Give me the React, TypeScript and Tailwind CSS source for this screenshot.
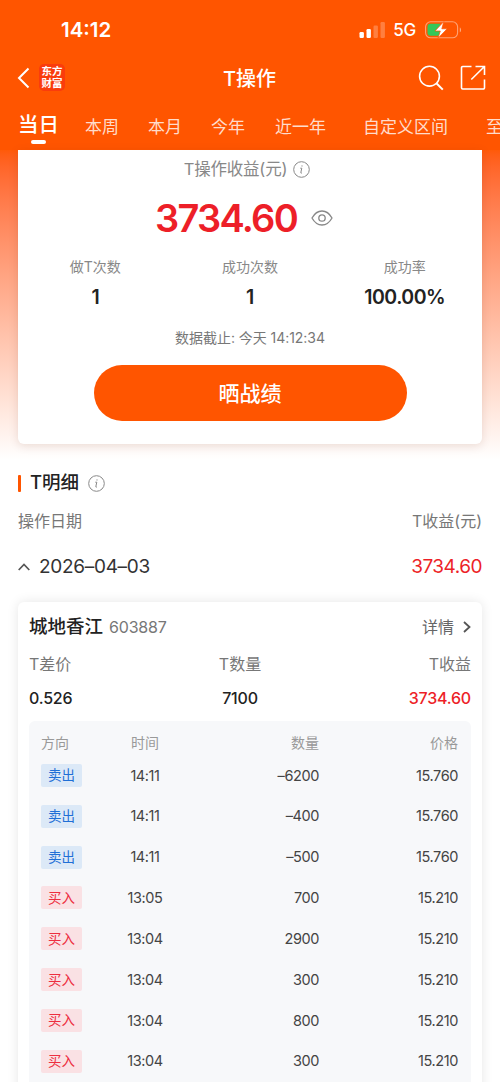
import React from "react";
import clsx from "clsx";

const tabs = [
  { label: "本周", className: "ml-[26px]" },
  { label: "本月", className: "ml-[29px]" },
  { label: "今年", className: "ml-[29px]" },
  { label: "近一年", className: "ml-[30px]" },
  { label: "自定义区间", className: "ml-[37px] text-[17.3px]" },
  { label: "至今", className: "ml-[38px]" },
];

const stats = [
  { label: "做T次数", value: "1" },
  { label: "成功次数", value: "1" },
  { label: "成功率", value: "100.00%" },
];

const trades = [
  { side: "sell", time: "14:11", amount: "–6200", price: "15.760" },
  { side: "sell", time: "14:11", amount: "–400", price: "15.760" },
  { side: "sell", time: "14:11", amount: "–500", price: "15.760" },
  { side: "buy", time: "13:05", amount: "700", price: "15.210" },
  { side: "buy", time: "13:04", amount: "2900", price: "15.210" },
  { side: "buy", time: "13:04", amount: "300", price: "15.210" },
  { side: "buy", time: "13:04", amount: "800", price: "15.210" },
  { side: "buy", time: "13:04", amount: "300", price: "15.210" },
];

const InfoIcon: React.FC = () => (
  <svg width="17" height="17" viewBox="0 0 17 17" fill="none" stroke="#888" strokeWidth="1">
    <circle cx="8.5" cy="8.5" r="7.8" />
    <path d="M7.3 7.2h1.5l-1 4.4c-.1.6.5.7 1.2.2" />
    <circle cx="9" cy="4.9" r=".6" fill="#888" stroke="none" />
  </svg>
);

const StatusBar: React.FC = () => (
  <div className="flex h-[60px] items-center justify-between pr-[38px] pl-[61px]">
    <span className="pt-px text-[20.5px] font-semibold">14:12</span>
    <div className="flex items-center">
      <svg width="26" height="16" viewBox="0 0 26 16" fill="#fff">
        <rect x="0.500" y="10" width="4.4" height="6" rx="1.2" />
        <rect x="7.500" y="7" width="4.4" height="9" rx="1.2" />
        <rect x="14.500" y="3.5" width="4.4" height="12.5" rx="1.2" opacity=".25" />
        <rect x="21.500" y="0" width="4.4" height="16" rx="1.2" opacity=".25" />
      </svg>
      <span className="ml-2 pt-[2px] text-[17px] font-medium tracking-[-0.2px]">5G</span>
      <svg className="ml-[9px]" width="37" height="18" viewBox="0 0 37 18">
        <rect x=".6" y=".8" width="32" height="16" rx="5" fill="none" stroke="#fff" strokeOpacity=".45" strokeWidth="1.1" />
        <path d="M34.8 6.4c1.6.5 1.6 4.3 0 4.8z" fill="#fff" fillOpacity=".5" />
        <path d="M5.5 2.8H15v12H5.5a3 3 0 0 1-3-3v-6a3 3 0 0 1 3-3z" fill="#34c759" />
        <path d="M18.8.6 10 10h5.3l-2.3 7.2L22.2 7.8h-5.4z" fill="#fff" stroke="#ff5500" strokeWidth=".7" />
      </svg>
    </div>
  </div>
);

const NavBar: React.FC = () => (
  <div className="flex h-[35px] items-center justify-between pr-[14px] pl-[17px]">
    <div className="flex w-[100px] items-center gap-[9px]">
      <svg width="13" height="22" viewBox="0 0 13 22" fill="none" stroke="#fff" strokeWidth="2">
        <path d="M11.5 1.5 2 11l9.5 9.5" />
      </svg>
      <div className="flex h-[27px] w-[26px] flex-col items-center justify-center rounded-[5px] bg-[#fa3c0c] text-[10.5px] leading-[11.5px] font-bold">
        <span>东方</span>
        <span>财富</span>
      </div>
    </div>
    <h1 className="ml-[-4px] pt-[3px] text-[20px] font-medium">T操作</h1>
    <div className="flex w-[100px] items-center justify-end gap-4">
      <svg width="26" height="26" viewBox="0 0 26 26" fill="none" stroke="#fff" strokeWidth="1.6">
        <circle cx="11.5" cy="11.2" r="9.9" />
        <path d="m18.4 18.2 6.4 6.4" strokeWidth="2" />
      </svg>
      <svg width="26" height="26" viewBox="0 0 26 26" fill="none" stroke="#fff" strokeWidth="1.6">
        <path d="M11.500 1.500H2.700A1.200 1.200 0 0 0 1.500 2.700v20.100A1.200 1.200 0 0 0 2.700 24h20.600a1.200 1.200 0 0 0 1.200-1.200v-8.300" />
        <path d="M15.500 1.500h9v8.500M24.200 1.800 11.300 14.500" />
      </svg>
    </div>
  </div>
);

const Tabs: React.FC = () => (
  <div className="flex h-[55px] items-start overflow-hidden pl-[18px] whitespace-nowrap">
    <div className="flex shrink-0 flex-col items-center pt-[15px]">
      <span className="text-[20.5px] leading-[30px] font-medium">当日</span>
      <span className="h-[4px] w-[15px] rounded-full bg-white" />
    </div>
    {tabs.map((tab) => (
      <span
        key={tab.label}
        className={clsx("shrink-0 pt-[20px] text-[17px] leading-[25px] text-[#ffdccb]", tab.className)}
      >
        {tab.label}
      </span>
    ))}
  </div>
);

const Summary: React.FC = () => (
  <section className="h-[310px] bg-linear-to-b from-[#ff5a08] to-white px-[18px]">
    <div className="flex h-[294px] flex-col items-center rounded-b-[6px] bg-white shadow-[0_2px_10px_rgba(90,30,10,0.13)]">
      <div className="ml-[-6px] flex h-[38px] items-center gap-[6px] text-[16.5px] tracking-[-0.2px] text-[#888]">
        T操作收益(元)
        <InfoIcon />
      </div>
      <div className="mt-[6px] ml-[-12px] flex h-[48px] items-center gap-[14px]">
        <span className="text-[38px] font-semibold tracking-[-1.7px] text-[#ed1f28]">3734.60</span>
        <svg width="22" height="18" viewBox="0 0 22 18" fill="none" stroke="#888" strokeWidth="1.3">
          <path d="M1 9c2.500-4.500 6-7 10-7s7.500 2.500 10 7c-2.500 4.500-6 7-10 7S3.500 13.500 1 9z" />
          <circle cx="11" cy="9" r="3.2" />
        </svg>
      </div>
      <div className="mt-[14px] grid w-full grid-cols-3 text-center">
        {stats.map((stat) => (
          <div key={stat.label}>
            <div className="text-[14px] leading-[22px] text-[#888]">{stat.label}</div>
            <div className="mt-[5px] text-[19.5px] leading-[28px] font-semibold tracking-[-0.5px] text-[#222]">
              {stat.value}
            </div>
          </div>
        ))}
      </div>
      <p className="mt-[16px] text-[14px] leading-[22px] tracking-[-0.05px] text-[#777]">数据截止: 今天 14:12:34</p>
      <button className="mt-[16px] h-[56px] w-[313px] rounded-full bg-[#ff5500] pt-px text-[21px] font-medium text-white">
        晒战绩
      </button>
    </div>
  </section>
);

const TradeRow: React.FC<(typeof trades)[number]> = ({ side, time, amount, price }) => (
  <div className="grid h-[40.85px] grid-cols-[41px_126px_111px_139px] items-center text-right text-[14.5px] tracking-[-0.4px] text-[#444]">
    <span
      className={clsx(
        "flex h-[23px] w-[41px] items-center justify-center rounded-[2px] text-[13.5px] tracking-normal",
        side === "sell" ? "bg-[#dce9f7] text-[#1f6fd6]" : "bg-[#fae1e4] text-[#ed2f40]",
      )}
    >
      {side === "sell" ? "卖出" : "买入"}
    </span>
    <span className="text-center">{time}</span>
    <span>{amount}</span>
    <span>{price}</span>
  </div>
);

const StockCard: React.FC = () => (
  <div className="mt-[13px] h-[500px] rounded-t-[6px] bg-white px-[11px] shadow-[0_0_12px_rgba(0,0,0,0.1)]">
    <div className="flex h-[50px] items-center justify-between">
      <div className="flex items-center gap-[6px]">
        <span className="text-[18.5px] font-medium text-[#222]">城地香江</span>
        <span className="text-[16px] tracking-[-0.2px] text-[#777]">603887</span>
      </div>
      <div className="flex items-center gap-[9px] text-[16px] text-[#666]">
        详情
        <svg width="8" height="12" viewBox="0 0 8 12" fill="none" stroke="#555" strokeWidth="1.8">
          <path d="m1 1 5.5 5L1 11" />
        </svg>
      </div>
    </div>
    <div className="grid grid-cols-[181px_60px_1fr] text-[16px] leading-[24px] text-[#777]">
      <span>T差价</span>
      <span className="text-center whitespace-nowrap">T数量</span>
      <span className="text-right">T收益</span>
    </div>
    <div className="mt-[10px] grid grid-cols-[181px_60px_1fr] text-[16px] leading-[24px] font-medium tracking-[-0.2px] text-[#222]">
      <span>0.526</span>
      <span className="text-center">7100</span>
      <span className="text-right text-[#ed1f28]">3734.60</span>
    </div>
    <div className="mt-[11px] h-[380px] rounded-t-[6px] bg-[#f7f8fa] px-3 pt-[9px]">
      <div className="grid h-[25px] grid-cols-[41px_126px_111px_139px] items-center pb-px text-right text-[14px] text-[#999]">
        <span className="text-left">方向</span>
        <span className="text-center">时间</span>
        <span>数量</span>
        <span>价格</span>
      </div>
      {trades.map((trade, i) => (
        <TradeRow key={i} {...trade} />
      ))}
    </div>
  </div>
);

const Details: React.FC = () => (
  <section className="px-[18px]">
    <div className="flex h-[46px] items-center">
      <span className="h-[17px] w-[3px] rounded-[1px] bg-[#ff5500]" />
      <h2 className="ml-[9px] text-[18.5px] font-medium text-[#222]">T明细</h2>
      <span className="ml-[9px]">
        <InfoIcon />
      </span>
    </div>
    <div className="flex h-[30px] items-center justify-between text-[16px] text-[#777]">
      <span>操作日期</span>
      <span>T收益(元)</span>
    </div>
    <div className="flex h-[53px] items-center pt-[9px] text-[19px] tracking-[-0.3px] text-[#333]">
      <svg width="12" height="8" viewBox="0 0 12 8" fill="none" stroke="#555" strokeWidth="1.7">
        <path d="M.7 7 6 1.5 11.3 7" />
      </svg>
      <span className="ml-[9px]">2026–04–03</span>
      <span className="ml-auto tracking-[-0.5px] text-[#ed1f28]">3734.60</span>
    </div>
    <StockCard />
  </section>
);

const App: React.FC = () => {
  return (
    <main className="h-[1082px] w-[500px] overflow-hidden bg-white font-[Inter,'Noto_Sans_CJK_SC',sans-serif]">
      <header className="h-[150px] bg-[#ff5500] text-white">
        <StatusBar />
        <NavBar />
        <Tabs />
      </header>
      <Summary />
      <Details />
    </main>
  );
};

export default App;
